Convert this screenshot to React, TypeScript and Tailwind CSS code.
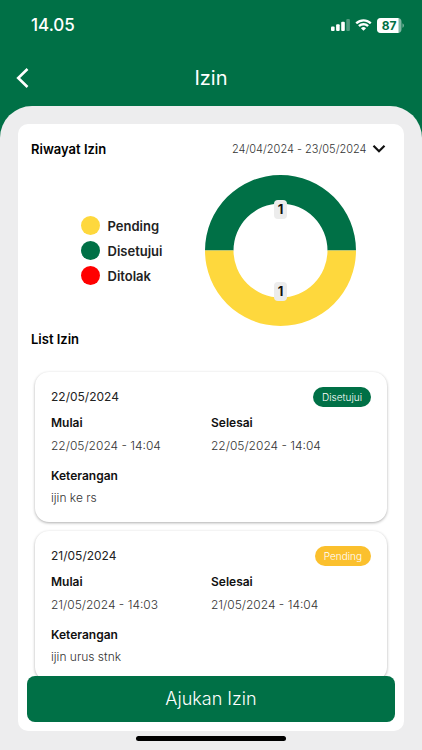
import React from "react";

type Status = "Pending" | "Disetujui" | "Ditolak";

interface Leave {
  date: string;
  status: Status;
  start: string;
  end: string;
  note: string;
}

const leaves: Leave[] = [
  { date: "22/05/2024", status: "Disetujui", start: "22/05/2024 - 14:04", end: "22/05/2024 - 14:04", note: "ijin ke rs" },
  { date: "21/05/2024", status: "Pending", start: "21/05/2024 - 14:03", end: "21/05/2024 - 14:04", note: "ijin urus stnk" },
];

const legend: { label: Status; dot: string }[] = [
  { label: "Pending", dot: "bg-[#fed83d]" },
  { label: "Disetujui", dot: "bg-[#007046]" },
  { label: "Ditolak", dot: "bg-[#ff0000]" },
];

const badgeColor: Record<Status, string> = {
  Pending: "bg-[#fbc02d]",
  Disetujui: "bg-[#007046]",
  Ditolak: "bg-[#ff0000]",
};

function StatusBar() {
  return (
    <div className="flex h-[50px] items-center justify-between pr-[18px] pl-[31px] text-white">
      <span className="text-[17px] leading-6 font-medium">14.05</span>
      <div className="flex items-center gap-[5px]">
        <svg width="19" height="12" viewBox="0 0 19 12" fill="currentColor" aria-label="Sinyal">
          <rect x="0" y="7.5" width="3.6" height="4.5" rx="1" />
          <rect x="5.1" y="5.3" width="3.6" height="6.7" rx="1" />
          <rect x="10.2" y="2.8" width="3.6" height="9.2" rx="1" />
          <rect x="15.3" y="0" width="3.6" height="12" rx="1" opacity="0.3" />
        </svg>
        <svg width="17" height="12" viewBox="0 0 17 12" fill="currentColor" aria-label="Wi-Fi">
          <path d="M8.5 2.5c2.4 0 4.6.9 6.2 2.5.13.12.32.12.44 0l1.2-1.2a.32.32 0 0 0 0-.46C12-.84 5-.84.66 3.34a.32.32 0 0 0 0 .46l1.2 1.2c.12.12.31.12.44 0A8.9 8.9 0 0 1 8.5 2.5Z" />
          <path d="M8.5 6.4c1.3 0 2.56.48 3.52 1.35.13.13.33.12.46 0l1.18-1.2a.33.33 0 0 0 0-.47 7.5 7.5 0 0 0-10.32 0 .33.33 0 0 0 0 .47l1.18 1.2c.13.12.33.13.46 0A5.2 5.2 0 0 1 8.5 6.4Z" />
          <path d="M10.82 9.02a.32.32 0 0 1 0 .47l-2.08 2.1a.33.33 0 0 1-.47 0L6.18 9.5a.32.32 0 0 1 0-.48 3.55 3.55 0 0 1 4.64 0Z" />
        </svg>
        <svg width="27" height="15" viewBox="0 0 27 15" aria-label="Baterai 87%">
          <rect width="24.5" height="15" rx="4" fill="#fff" opacity="0.5" />
          <path d="M4 0h17.5v15H4a4 4 0 0 1-4-4V4a4 4 0 0 1 4-4Z" fill="#fff" />
          <path d="M25.5 5.2c1.8.8 1.8 3.8 0 4.6Z" fill="#fff" opacity="0.5" />
          <text x="12.2" y="12" textAnchor="middle" fontSize="12" fontWeight="700" fill="#007046">87</text>
        </svg>
      </div>
    </div>
  );
}

function Donut() {
  return (
    <svg width="151" height="151" viewBox="0 0 151 151" role="img" aria-label="1 disetujui, 1 pending">
      <path d="M0 75.5a75.5 75.5 0 0 1 151 0h-28.5a47 47 0 0 0-94 0Z" fill="#007046" />
      <path d="M0 75.5a75.5 75.5 0 0 0 151 0h-28.5a47 47 0 0 1-94 0Z" fill="#fed83d" />
      <g fontSize="13" fontWeight="700" textAnchor="middle">
        <rect x="69" y="25" width="13" height="19" rx="4" fill="#ececec" />
        <text x="75.5" y="39" fill="#111">1</text>
        <rect x="69" y="107" width="13" height="19" rx="4" fill="#ececec" />
        <text x="75.5" y="121" fill="#111">1</text>
      </g>
    </svg>
  );
}

function LeaveCard({ leave }: { leave: Leave }) {
  return (
    <li className="rounded-[14px] bg-white px-4 pt-[15px] pb-[13px] shadow-[0_1px_3px_rgba(0,0,0,0.32)]">
      <div className="flex items-center justify-between">
        <span className="text-xs leading-5 text-[#222]">{leave.date}</span>
        <span className={`rounded-full px-[9px] text-[10px] leading-5 font-light text-white ${badgeColor[leave.status]}`}>
          {leave.status}
        </span>
      </div>
      <dl className="mt-[5px] grid grid-cols-2 gap-y-2 text-xs">
        <div>
          <dt className="leading-[22px] font-semibold text-[#111]">Mulai</dt>
          <dd className="leading-[23px] font-light text-[#333]">{leave.start}</dd>
        </div>
        <div>
          <dt className="leading-[22px] font-semibold text-[#111]">Selesai</dt>
          <dd className="leading-[23px] font-light text-[#333]">{leave.end}</dd>
        </div>
        <div className="col-span-2">
          <dt className="leading-[22px] font-semibold text-[#111]">Keterangan</dt>
          <dd className="leading-[22px] font-light text-[#333]">{leave.note}</dd>
        </div>
      </dl>
    </li>
  );
}

export default function App() {
  return (
    <div className="flex h-screen flex-col bg-[#007046] font-['Inter',sans-serif]">
      <StatusBar />
      <header className="grid h-14 grid-cols-[48px_1fr_48px] items-center text-white">
        <button type="button" aria-label="Kembali" className="flex h-12 items-center pl-4">
          <svg width="13" height="20" viewBox="0 0 13 20" fill="none" stroke="currentColor" strokeWidth="2.6">
            <path d="M11.5 1 2.2 10l9.3 9" />
          </svg>
        </button>
        <h1 className="text-center text-xl">Izin</h1>
      </header>

      <main className="flex min-h-0 flex-1 flex-col rounded-t-[32px] bg-[#ededee] px-[18px] pt-[18px]">
        <section className="flex min-h-0 flex-1 flex-col rounded-[10px] bg-white px-[9px] pb-[9px]">
          <div className="flex items-center justify-between px-1 pt-[15px]">
            <h2 className="text-[13px] leading-5 font-semibold text-black">Riwayat Izin</h2>
            <div className="relative flex items-center">
              <select
                aria-label="Periode"
                className="appearance-none bg-transparent pr-6 text-[11px] leading-5 font-light text-[#333]"
              >
                <option>24/04/2024 - 23/05/2024</option>
              </select>
              <svg className="pointer-events-none absolute right-[5px]" width="14" height="10" viewBox="0 0 14 10" fill="none" stroke="#111" strokeWidth="2.2">
                <path d="m1.5 1.8 5.5 5.4 5.5-5.4" />
              </svg>
            </div>
          </div>

          <div className="mt-4 flex items-center justify-center gap-[43px] pl-[15px]">
            <ul className="flex flex-col gap-[5px]">
              {legend.map((item) => (
                <li key={item.label} className="flex items-center gap-2 text-[13px] leading-5 font-semibold text-[#222]">
                  <span className={`size-[19px] rounded-full ${item.dot}`} />
                  {item.label}
                </li>
              ))}
            </ul>
            <Donut />
          </div>

          <h2 className="mt-[3px] px-1 text-[13px] leading-5 font-semibold text-black">List Izin</h2>

          <ul className="mt-[17px] flex min-h-0 flex-1 flex-col gap-[9px] overflow-y-auto px-2 pt-[6px] [scrollbar-width:none]">
            {leaves.map((leave) => (
              <LeaveCard key={leave.date} leave={leave} />
            ))}
          </ul>

          <button type="button" className="h-[46px] shrink-0 rounded-lg bg-[#007046] text-lg font-light text-white">
            Ajukan Izin
          </button>
        </section>
        <div className="flex h-[19px] shrink-0 justify-center pt-[5px]">
          <div className="h-[5px] w-[150px] rounded-full bg-black" />
        </div>
      </main>
    </div>
  );
}
